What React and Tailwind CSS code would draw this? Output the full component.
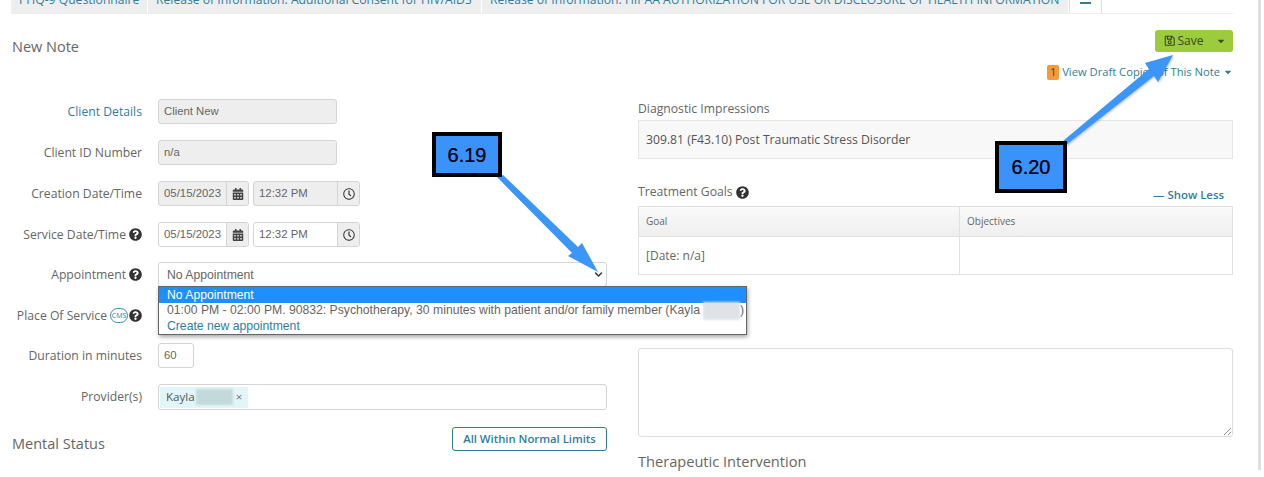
import { FaCalendarAlt, FaRegClock, FaQuestionCircle, FaRegSave, FaCaretDown, FaChevronDown } from "react-icons/fa";

const sans = "font-['Open_Sans',sans-serif]";
const arial = "font-['Liberation_Sans',Arial,sans-serif]";

function Help() {
    return <FaQuestionCircle className="text-[13px] text-[#333] shrink-0" />;
}

function FormRow({ label, link, children, className = "" }) {
    return (
        <div className={`flex items-center h-[25px] ${className}`}>
            <div className={`w-[130px] mr-[16px] pt-[1px] flex justify-end items-center gap-[3px] text-[12.2px] whitespace-nowrap ${link ? "text-[#2f7d9e]" : "text-[#666]"}`}>
                {label}
            </div>
            {children}
        </div>
    );
}

function TextBox({ value, width, disabled = true }) {
    return (
        <div className={`h-full border border-[#d4d4d4] rounded-[3px] flex items-center px-[5px] text-[11.3px] text-[#666] ${arial} ${width} ${disabled ? "bg-[#eeeeee]" : "bg-white"}`}>
            {value}
        </div>
    );
}

function AddonInput({ value, icon, width, disabled }) {
    return (
        <div className={`h-full flex border border-[#d4d4d4] rounded-[3px] overflow-hidden text-[11.4px] text-[#666] ${arial} ${width} ${disabled ? "bg-[#eeeeee]" : "bg-white"}`}>
            <div className="flex-1 flex items-center px-[5px] whitespace-nowrap">{value}</div>
            <div className="w-[22px] flex items-center justify-center border-l border-[#d4d4d4] bg-[#eeeeee] text-[#444] text-[12px]">
                {icon}
            </div>
        </div>
    );
}

function DateTime({ disabled }) {
    return (
        <div className="h-full flex gap-[4px]">
            <AddonInput value="05/15/2023" icon={<FaCalendarAlt />} width="w-[91px]" disabled={disabled} />
            <AddonInput value="12:32 PM" icon={<FaRegClock />} width="w-[107px]" disabled={disabled} />
        </div>
    );
}

function Callout({ text, className }) {
    return (
        <div className={`absolute flex items-center justify-center bg-[#3a92fa] border-[4px] border-black text-[20px] text-[#0a0a1e] [text-shadow:0_0_0.6px_#0a0a1e] ${arial} ${className}`}>
            {text}
        </div>
    );
}

export default function App() {
    return (
        <div className={`relative w-[1264px] h-[477px] overflow-hidden bg-white ${sans}`}>
            {/* tabs, cut off by the top of the shot */}
            <div className="flex h-[14px] ml-[11px] mr-[31px] border-b border-[#eeeeee] text-[12.15px] text-[#2f7d9e] whitespace-nowrap">
                <div className="w-[136px] mr-[1px] bg-[#eeeeee] overflow-hidden pl-[8px] leading-[0px]">PHQ-9 Questionnaire</div>
                <div className="w-[333px] mr-[1px] bg-[#eeeeee] overflow-hidden pl-[8px] leading-[0px]">Release of Information: Additional Consent for HIV/AIDS</div>
                <div className="w-[586px] mr-[1px] bg-[#eeeeee] overflow-hidden pl-[8px] leading-[0px]">Release of Information: HIPAA AUTHORIZATION FOR USE OR DISCLOSURE OF HEALTH INFORMATION</div>
                <div className="w-[33px] border-x border-[#dddddd] flex justify-center">
                    <div className="w-[11px] h-[2px] mt-[2px] bg-[#2f7d9e]" />
                </div>
            </div>

            <div className="flex gap-[31px] pl-[12px]">
                {/* left column */}
                <div className="w-[595px] relative">
                    <div className="mt-[23px] h-[20px] leading-[20px] text-[14.5px] text-[#666]">New Note</div>

                    <div className="mt-[42px] flex flex-col">
                        <FormRow label="Client Details" link className="mb-[16px]">
                            <TextBox value="Client New" width="w-[179px]" />
                        </FormRow>
                        <FormRow label="Client ID Number" className="mb-[16px]">
                            <TextBox value="n/a" width="w-[179px]" />
                        </FormRow>
                        <FormRow label="Creation Date/Time" className="mb-[16px]">
                            <DateTime disabled />
                        </FormRow>
                        <FormRow label={<>Service Date/Time <Help /></>} className="mb-[15px]">
                            <DateTime />
                        </FormRow>
                        <FormRow label={<>Appointment <Help /></>} className="mb-[16px]">
                            <div className={`relative w-[449px] h-full border border-[#d4d4d4] rounded-[3px] flex items-center justify-between pl-[8px] pr-[3px] text-[12.2px] text-[#666] ${arial}`}>
                                <span className="pt-[1px]">No Appointment</span>
                                <FaChevronDown className="relative z-30 text-[9px] text-[#333]" />
                                <div className="absolute left-[-1px] top-[23px] z-10 w-[589px] h-[49px] bg-white border border-[#666] shadow-[1px_2px_4px_rgba(0,0,0,0.35)] whitespace-nowrap">
                                    <div className="h-[16px] leading-[17px] pl-[8px] bg-[#1e8fff] text-white">No Appointment</div>
                                    <div className="h-[15px] leading-[15px] pl-[8px] flex">
                                        01:00 PM - 02:00 PM. 90832: Psychotherapy, 30 minutes with patient and/or family member (Kayla
                                        <span className="w-[37px] h-[18px] ml-[3px] -mt-[1px] bg-[#dfe3e8] blur-[1px]" />
                                        <span>)</span>
                                    </div>
                                    <div className="h-[15px] leading-[17px] pl-[8px] text-[#2f7d9e]">Create new appointment</div>
                                </div>
                            </div>
                        </FormRow>
                        <FormRow
                            label={
                                <>
                                    Place Of Service
                                    <span className="-mr-[2px] w-[18px] h-[15px] rounded-full border border-[#2f8fb0] flex items-center justify-center text-[7px] text-[#2f7d9e]">CMS</span>
                                    <Help />
                                </>
                            }
                            className="mb-[15px]"
                        >
                            <div />
                        </FormRow>
                        <FormRow label="Duration in minutes" className="mb-[16px]">
                            <TextBox value="60" width="w-[36px]" disabled={false} />
                        </FormRow>
                        <FormRow label="Provider(s)" className="!h-[26px]">
                            <div className="w-[449px] h-full border border-[#d4d4d4] rounded-[3px] flex items-center pl-[1px]">
                                <div className="h-[21px] w-[88px] bg-[#e2f6f9] flex items-center pl-[6px] text-[11.6px] text-[#555]">
                                    Kayla
                                    <span className="w-[37px] h-[16px] ml-[1px] bg-[#c3dadb] blur-[1px]" />
                                    <span className="ml-[3px] text-[#777]">×</span>
                                </div>
                            </div>
                        </FormRow>
                    </div>

                    <div className="mt-[17px] flex justify-between items-start">
                        <div className="mt-[7px] text-[14.5px] leading-[20px] text-[#666]">Mental Status</div>
                        <div className="w-[155px] h-[24px] border border-[#2f7d9e] rounded-[3px] flex items-center justify-center text-[11.3px] font-semibold text-[#2f7d9e]">
                            All Within Normal Limits
                        </div>
                    </div>
                </div>

                {/* right column */}
                <div className="w-[595px]">
                    <div className="mt-[16px] flex justify-end">
                        <div className="w-[78px] h-[22px] bg-[#9ccb3b] rounded-[3px] flex items-center text-[12px] text-[#3c4a22]">
                            <FaRegSave className="ml-[9px] mr-[2px] text-[11.5px]" />
                            Save
                            <FaCaretDown className="ml-auto mr-[7px] text-[10px]" />
                        </div>
                    </div>
                    <div className="mt-[13px] flex justify-end items-center text-[11.2px] text-[#2f7d9e] h-[14px]">
                        <span className="w-[12px] h-[15px] mr-[3px] bg-[#f7983a] rounded-[2px] flex items-center justify-center text-[11px] text-[#444]">1</span>
                        View Draft Copies of This Note
                        <FaCaretDown className="ml-[3px] text-[10px]" />
                    </div>

                    <div className="mt-[22px] h-[16px] leading-[16px] text-[12.2px] text-[#666]">Diagnostic Impressions</div>
                    <div className="mt-[3px] h-[39px] bg-[#f8f8f8] border border-[#e6e6e6] flex items-center pt-[1px] px-[7px] text-[12.2px] text-[#555]">
                        309.81 (F43.10) Post Traumatic Stress Disorder
                    </div>

                    <div className="mt-[25px] h-[16px] flex justify-between items-center text-[12.2px] text-[#666]">
                        <span className="flex items-center gap-[3px]">Treatment Goals <Help /></span>
                        <span className="mr-[9px] mt-[6px] text-[11.4px] font-semibold text-[#2f7d9e]">— Show Less</span>
                    </div>
                    <table className="mt-[6px] w-full h-[69px] border border-[#e0e0e0] text-[#666] table-fixed">
                        <thead>
                            <tr className="h-[30px] bg-gradient-to-b from-[#fafafa] to-[#eeeeee] text-[10px]">
                                <th className="w-[321px] px-[7px] text-left font-normal border-r border-[#e0e0e0]">Goal</th>
                                <th className="px-[7px] text-left font-normal">Objectives</th>
                            </tr>
                        </thead>
                        <tbody>
                            <tr className="border-t border-[#e0e0e0] text-[12px]">
                                <td className="px-[7px] pt-[1px] border-r border-[#e0e0e0]">[Date: n/a]</td>
                                <td className="px-[7px]"></td>
                            </tr>
                        </tbody>
                    </table>

                    <div className="mt-[73px] h-[89px] border border-[#dddddd] rounded-[3px] relative">
                        <svg className="absolute right-[1px] bottom-[1px]" width="8" height="8" viewBox="0 0 8 8">
                            <path d="M1 8 L8 1 M5 8 L8 5" stroke="#888" strokeWidth="1" />
                        </svg>
                    </div>
                    <div className="mt-[14px] h-[20px] leading-[20px] text-[14.6px] text-[#666]">Therapeutic Intervention</div>
                </div>
            </div>

            {/* page scrollbar edge */}
            <div className="absolute left-[1258px] top-0 w-[3px] h-[470px] bg-[#dedede]" />

            {/* tutorial arrows and callouts */}
            <svg className="absolute inset-0 z-20 pointer-events-none" width="1264" height="477" viewBox="0 0 1264 477">
                <polygon points="497,177 503,175 578,247 582,243 598,272 568,256 572,253" fill="#3b96f8" />
                <polygon
                    points="1063,141 1066,145 1154,76 1158,82 1173,55 1145,63 1149,69"
                    fill="#3b96f8"
                    style={{ filter: "drop-shadow(1px 1px 1px rgba(0,0,0,0.25))" }}
                />
            </svg>
            <Callout text="6.19" className="left-[432px] top-[132px] w-[70px] h-[45px] z-30" />
            <Callout text="6.20" className="left-[995px] top-[141px] w-[72px] h-[52px] z-30" />
        </div>
    );
}
